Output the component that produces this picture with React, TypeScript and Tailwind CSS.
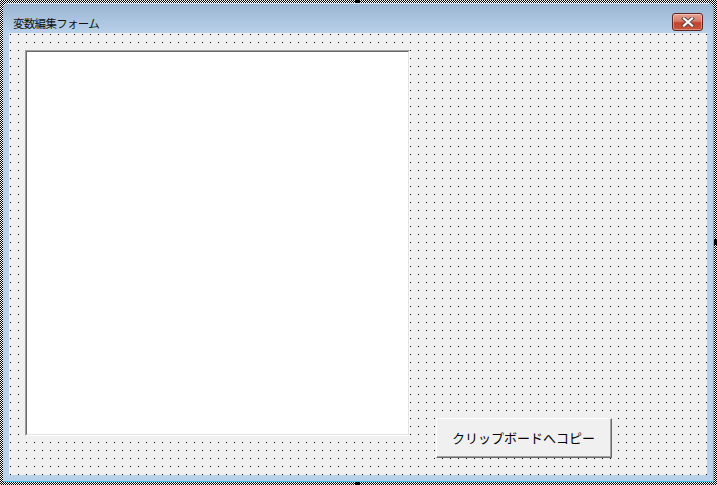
import React from "react";

const jp = { fontFamily: '"Noto Sans CJK JP", "Noto Sans", sans-serif' };

function CloseButton() {
  return (
    <div className="w-[31px] h-[18px] rounded-[3px] border border-[#5e2520] bg-[linear-gradient(to_bottom,#e8a493_0%,#d97a66_45%,#c1432e_55%,#c9553d_100%)] flex items-center justify-center shadow-[inset_0_0_0_1px_rgba(255,255,255,0.35)]">
      <svg width="14" height="10" viewBox="0 0 14 10">
        <path d="M3 1.5 L11 8.5 M11 1.5 L3 8.5" stroke="#5a4a48" strokeWidth="4" strokeLinecap="square" />
        <path d="M3 1.5 L11 8.5 M11 1.5 L3 8.5" stroke="#ffffff" strokeWidth="2.2" strokeLinecap="square" />
      </svg>
    </div>
  );
}

export default function App() {
  return (
    <div className="relative w-[717px] h-[485px] overflow-hidden p-[3px] bg-[repeating-conic-gradient(#000_0_25%,#fff_0_50%)] bg-[length:2px_2px]">
      {/* sizing handles */}
      <div className="absolute left-[355px] top-0 w-[5px] h-[3px] bg-black" />
      <div className="absolute left-[355px] bottom-0 w-[5px] h-[3px] bg-black" />
      <div className="absolute right-0 top-[239px] w-[3px] h-[6px] bg-black" />

      {/* window frame */}
      <div className="w-[711px] h-[479px] flex flex-col bg-[#b9d1ea] rounded-tl-[6px] rounded-tr-[6px] border-r border-b border-[#3cc0e6] overflow-hidden">
        {/* title bar */}
        <div className="h-[30px] shrink-0 flex items-start justify-between pl-[10px] pr-[10px] bg-[linear-gradient(to_bottom,#99b4d1,#b9d1ea)] border-t border-[#d6e3f1]">
          <span className="pt-[11px] text-[11.5px] leading-[16px] text-[#111] tracking-[-0.7px]" style={jp}>
            変数編集フォーム
          </span>
          <div className="pt-[9px]">
            <CloseButton />
          </div>
        </div>

        {/* client area with design grid */}
        <div className="flex-1 mx-[6px] mb-[6px] bg-[#f0f0f0] bg-[linear-gradient(to_right,transparent_1px,#f0f0f0_1px),linear-gradient(to_bottom,#000_1px,transparent_1px)] bg-[length:8px_8px] bg-[position:1px_1px] pl-[16px] pt-[17px] flex items-start">
          {/* text box */}
          <div className="w-[385px] h-[386px] shrink-0 border-t border-l border-[#a0a0a0] border-r-white border-b-white border-r border-b">
            <div className="w-full h-full bg-white border-t border-l border-[#696969] border-r border-b border-r-[#e3e3e3] border-b-[#e3e3e3]" />
          </div>

          {/* button */}
          <div className="ml-[26px] mt-[368px] w-[176px] h-[40px] shrink-0 border-t border-l border-white border-r border-b border-r-[#696969] border-b-[#696969]">
            <div className="w-full h-full bg-[#f0f0f0] border-r border-b border-r-[#a0a0a0] border-b-[#a0a0a0] flex items-center justify-center">
              <span className="text-[13px] text-black" style={jp}>
                クリップボードへコピー
              </span>
            </div>
          </div>
        </div>
      </div>
    </div>
  );
}
